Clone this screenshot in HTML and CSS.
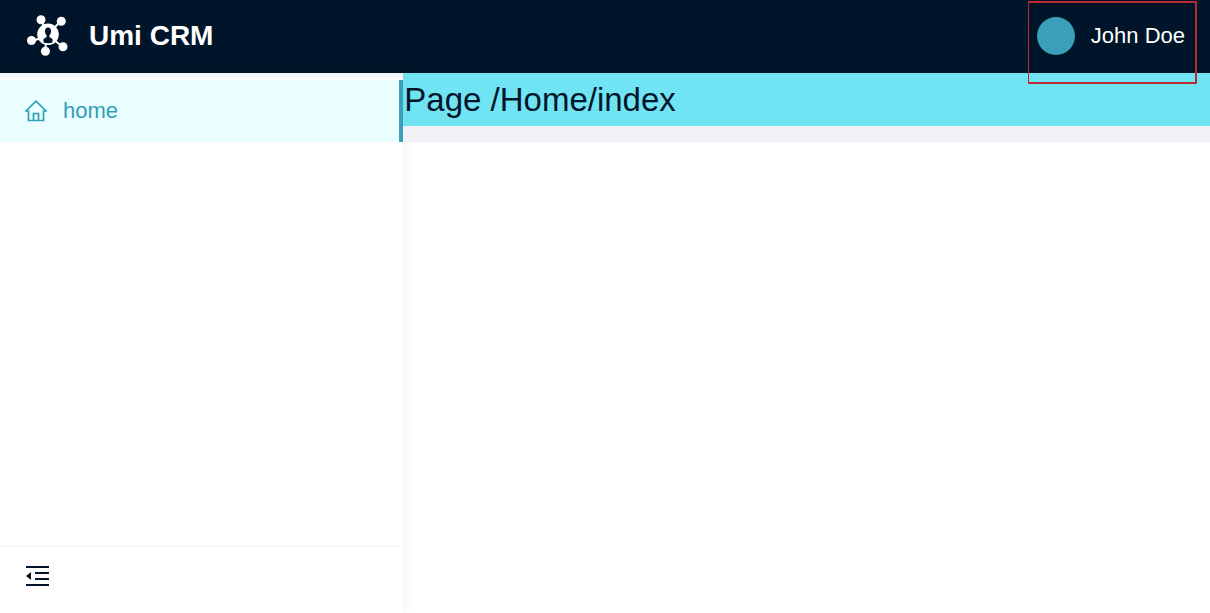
FILE: index.html
```html
<!DOCTYPE html>
<html lang="en">
<head>
  <meta charset="utf-8">
  <meta name="viewport" content="width=device-width, initial-scale=1">
  <title>Umi CRM</title>
  <link rel="stylesheet" href="styles.css">
</head>
<body>
  <header class="header">
    <a class="brand" href="#">
      <svg class="brand-logo" viewBox="0 0 42 42" aria-hidden="true">
        <path stroke="#fff" stroke-width="2" d="M14 5l4 8M34 6l-8 8M5 26l9-3M36 32l-9-7M18 36l1-8"/>
        <g fill="#fff">
          <circle cx="14" cy="4.700" r="4.500"/>
          <circle cx="34.300" cy="6.200" r="4.500"/>
          <circle cx="4.500" cy="25.500" r="4.500"/>
          <circle cx="36" cy="31.700" r="4.500"/>
          <circle cx="18.400" cy="36.300" r="4.500"/>
          <circle cx="21" cy="19.300" r="10.800"/>
        </g>
        <path fill="#001529" d="M21 12.500c-2 0-3 1.500-3 3.700 0 1.800.6 3.200 1.600 4.200v1.600L16.500 24v3.500q4.500 1.600 9 0V24l-3.100-2v-1.600c1-1 1.600-2.400 1.600-4.200 0-2.200-1-3.700-3-3.700z"/>
      </svg>
      <span class="brand-name">Umi CRM</span>
    </a>
    <div class="user">
      <span class="avatar"></span>
      <span class="user-name">John Doe</span>
    </div>
  </header>
  <div class="layout">
    <aside class="sidebar">
      <nav class="menu">
        <a class="menu-item" href="#" aria-current="page">
          <svg class="menu-icon" viewBox="0 0 22 22" fill="none" stroke="currentColor" stroke-width="1.700" aria-hidden="true">
            <path d="M3.500 11H1L11 1.200 21 11h-2.500M3.500 10.500v10h15v-10M8.500 20.500V13.500h5v7"/>
          </svg>
          <span>home</span>
        </a>
      </nav>
      <div class="sidebar-footer">
        <button class="collapse" type="button" aria-label="Collapse menu">
          <svg class="collapse-icon" viewBox="0 0 23 20" fill="#001529" aria-hidden="true">
            <path d="M0 0h23v2H0zM9 6h14v2H9zM9 12h14v2H9zM0 18h23v2H0zM0 10l5-4v8z"/>
          </svg>
        </button>
      </div>
    </aside>
    <main class="content">
      <h1 class="page-title">Page /Home/index</h1>
    </main>
  </div>
</body>
</html>
```
FILE: styles.css
```css
* {
  box-sizing: border-box;
}

body {
  display: flex;
  flex-direction: column;
  min-height: 100vh;
  margin: 0;
  background: #fff;
  color: #001529;
  font-family: "Liberation Sans", Arial, sans-serif;
  font-size: 22px;
  line-height: 32px;
}

.header {
  display: flex;
  align-items: center;
  justify-content: space-between;
  padding: 15px 25px 16px 27px;
  background: #001529;
  color: #fff;
}

.brand {
  display: flex;
  align-items: center;
  gap: 20px;
  color: inherit;
  text-decoration: none;
}

.brand-logo {
  width: 42px;
  height: 42px;
}

.brand-name {
  font-size: 28px;
  font-weight: 700;
}

.user {
  position: relative;
  display: flex;
  align-items: center;
  gap: 16px;
}

/* Highlight frame, overlapping the page below the header */
.user::after {
  content: "";
  position: absolute;
  inset: -16px -12px -29px -9px;
  border: 2px solid #b92b30;
  border-left-width: 1px;
  border-radius: 1px;
  pointer-events: none;
}

.avatar {
  width: 38px;
  height: 38px;
  border-radius: 50%;
  background: #3a9fb9;
}

.layout {
  flex: 1;
  display: grid;
  grid-template-columns: 1fr 2fr;
}

.sidebar {
  display: flex;
  flex-direction: column;
  box-shadow: 3px 0 8px rgba(29, 35, 41, 0.05);
}

.menu {
  flex: 1;
  padding-top: 7px;
  background: linear-gradient(#f0f2f7, #fff 9px);
}

.menu-item {
  display: flex;
  align-items: center;
  gap: 16px;
  padding: 15px 25px;
  border-right: 4px solid #3a9fb9;
  background: #ebfeff;
  color: #329fb8;
  text-decoration: none;
}

.menu-icon {
  width: 22px;
  height: 22px;
}

.sidebar-footer {
  display: flex;
  padding: 19px 26px 27px;
  border-top: 1px solid #f0f2f7;
}

.collapse {
  display: flex;
  padding: 0;
  border: 0;
  background: none;
  cursor: pointer;
}

.collapse-icon {
  width: 23px;
  height: 20px;
}

.page-title {
  margin: 0;
  padding: 1px 1px 0;
  border-bottom: 16px solid #f0f2f7;
  background: #70e4f3;
  font-size: 33px;
  font-weight: 400;
  line-height: 52px;
}
```
